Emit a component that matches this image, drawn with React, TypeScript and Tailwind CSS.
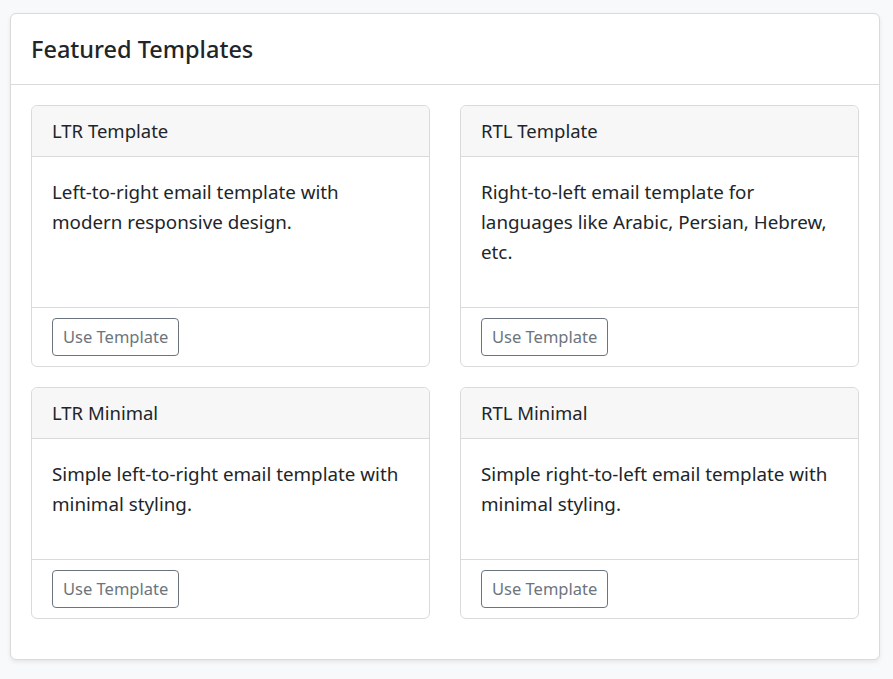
import React from "react";

const cards: { title: string; lines: string[] }[] = [
  { title: "LTR Template", lines: ["Left-to-right email template with", "modern responsive design."] },
  { title: "RTL Template", lines: ["Right-to-left email template for", "languages like Arabic, Persian, Hebrew,", "etc."] },
  { title: "LTR Minimal", lines: ["Simple left-to-right email template with", "minimal styling."] },
  { title: "RTL Minimal", lines: ["Simple right-to-left email template with", "minimal styling."] },
];

function Card({ title, lines }: { title: string; lines: string[] }) {
  return (
    <div className="flex h-full flex-col rounded-[6px] border border-[#dadada] bg-white">
      <div className="rounded-t-[6px] border-b border-[#dadada] bg-[#f7f7f7] px-5 py-[10px] text-[18.5px] leading-[30px] text-[#212529]">
        {title}
      </div>
      <div className="flex-1 p-5">
        <p className="mb-5 text-[18.8px] leading-[30px] text-[#212529]">
          {lines.map((l, i) => (
            <React.Fragment key={i}>
              {l}
              {i < lines.length - 1 && <br />}
            </React.Fragment>
          ))}
        </p>
      </div>
      <div className="border-t border-[#dadada] px-5 py-[10px]">
        <button className="h-[38px] rounded-[4px] border border-[#6c757d] bg-white px-[10px] text-[16.5px] leading-[26px] text-[#6c757d]">
          Use Template
        </button>
      </div>
    </div>
  );
}

export default function App() {
  return (
    <div
      className="min-h-[679px] bg-[#f8f9fa] pb-[19px] pl-[10px] pr-[13px] pt-[13px]"
      style={{ fontFamily: '"Noto Sans", "Open Sans", sans-serif' }}
    >
      <div className="rounded-[6px] border border-[#dadada] bg-white shadow-[0_2px_4px_rgba(0,0,0,0.08)]">
        <div className="border-b border-[#dadada] p-5">
          <h1 className="text-[23.5px] font-medium leading-[30px] text-[#212529]">Featured Templates</h1>
        </div>
        <div className="grid grid-cols-2 gap-x-[30px] p-5">
          {cards.map((c) => (
            <div key={c.title} className="mb-5">
              <Card title={c.title} lines={c.lines} />
            </div>
          ))}
        </div>
      </div>
    </div>
  );
}
